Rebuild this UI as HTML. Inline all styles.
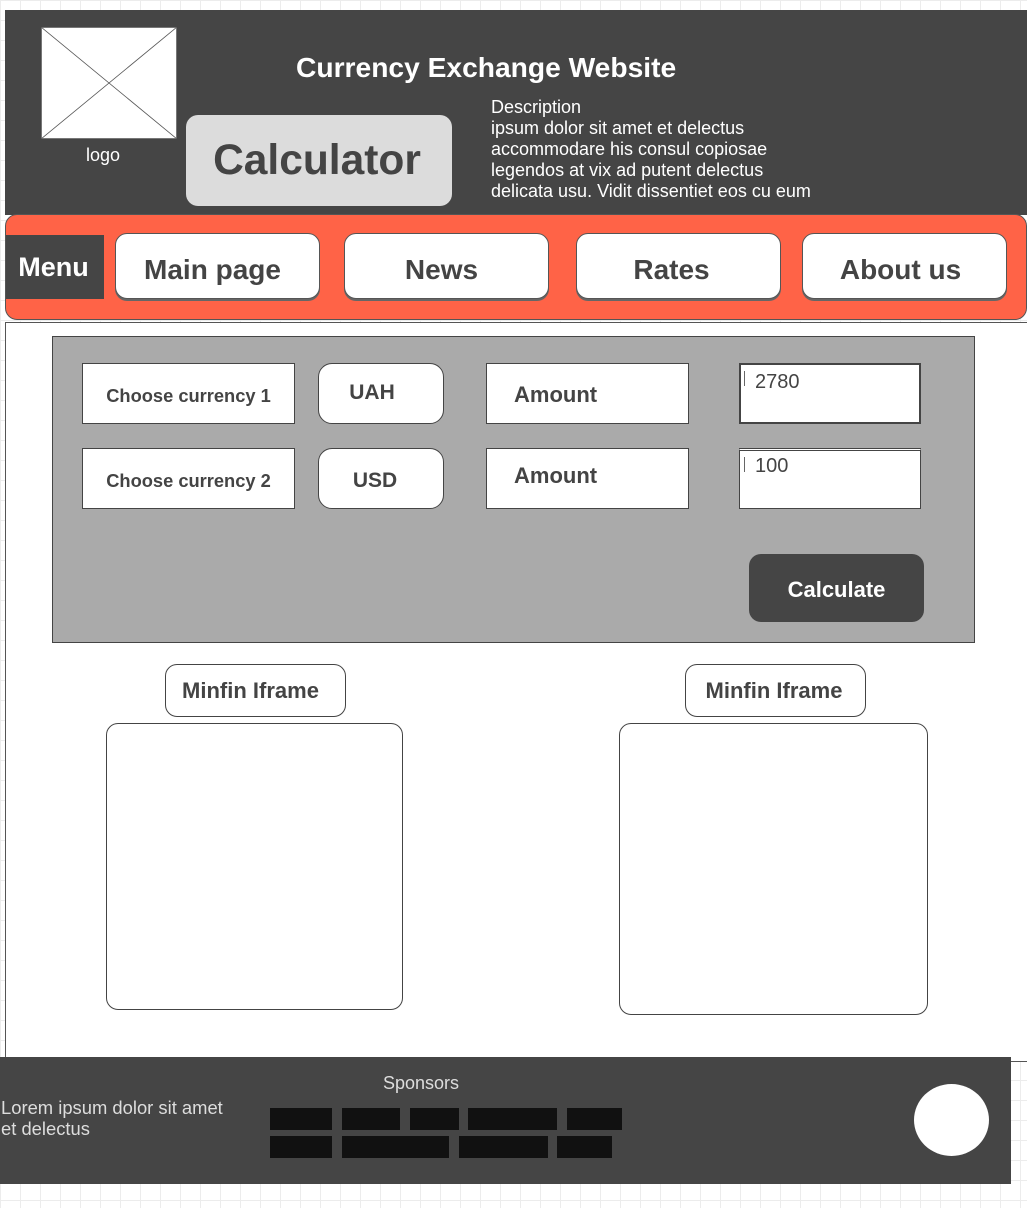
<!DOCTYPE html>
<html><head><meta charset="utf-8"><style>
*{box-sizing:border-box;margin:0;padding:0}
body{width:1027px;height:1208px;position:relative;overflow:hidden;font-family:"Liberation Sans",sans-serif;background-color:#fff;background-image:linear-gradient(#ececec 1px,transparent 1px),linear-gradient(90deg,#ececec 1px,transparent 1px);background-size:20px 20px}
.a{position:absolute}
.c{display:flex;align-items:center;justify-content:center}
.nav{background:#fff;border:1px solid #555;border-radius:12px;color:#444;font-weight:bold;font-size:28px;box-shadow:0 2px 0 #666;padding-top:8px}
.box{background:#fff;border:1px solid #444;color:#444;font-weight:bold}
</style></head><body>
<div class="a" style="left:5px;top:10px;width:1022px;height:205px;background:#454545"></div>
<div class="a" style="left:41px;top:27px;width:136px;height:112px;background:#fff;border:1px solid #777">
<svg width="136" height="112" style="position:absolute;left:-1px;top:-1px"><line x1="0" y1="0" x2="136" y2="112" stroke="#555" stroke-width="0.8"/><line x1="136" y1="0" x2="0" y2="112" stroke="#555" stroke-width="0.8"/></svg></div>
<div class="a" style="left:86px;top:145px;color:#fff;font-size:18px">logo</div>
<div class="a c" style="left:186px;top:115px;width:266px;height:91px;background:#dcdcdc;border-radius:12px;color:#444;font-weight:bold;font-size:42.5px;padding-right:4px">Calculator</div>
<div class="a" style="left:296px;top:51px;color:#fff;font-weight:bold;font-size:28.2px">Currency Exchange Website</div>
<div class="a" style="left:491px;top:97px;color:#fff;font-size:18px;line-height:21px">Description<br>ipsum dolor sit amet et delectus<br>accommodare his consul copiosae<br>legendos at vix ad putent delectus<br>delicata usu. Vidit dissentiet eos cu eum</div>
<div class="a" style="left:5px;top:214px;width:1022px;height:106px;background:#ff6347;border-radius:12px;border:1px solid #555"></div>
<div class="a c" style="left:6px;top:235px;width:98px;height:64px;background:#454545;color:#fff;font-weight:bold;font-size:27px;padding-right:3px">Menu</div>
<div class="a c nav" style="left:115px;top:233px;width:205px;height:66px;padding-right:10px">Main page</div>
<div class="a c nav" style="left:344px;top:233px;width:205px;height:66px;padding-right:10px">News</div>
<div class="a c nav" style="left:576px;top:233px;width:205px;height:66px;padding-right:14px">Rates</div>
<div class="a c nav" style="left:802px;top:233px;width:205px;height:66px;padding-right:8px">About us</div>
<div class="a" style="left:5px;top:322px;width:1024px;height:740px;background:#fff;border:1px solid #555;border-right:none"></div>
<div class="a" style="left:52px;top:336px;width:923px;height:307px;background:#aaa;border:1px solid #444"></div>
<div class="a c box" style="left:82px;top:363px;width:213px;height:61px;font-size:18.3px;padding-top:5px">Choose currency 1</div>
<div class="a c box" style="left:82px;top:448px;width:213px;height:61px;font-size:18.3px;padding-top:5px">Choose currency 2</div>
<div class="a c box" style="left:318px;top:363px;width:126px;height:61px;border-radius:14px;font-size:21px;padding:0 18px 2px 0">UAH</div>
<div class="a c box" style="left:318px;top:448px;width:126px;height:61px;border-radius:14px;font-size:21px;padding:4px 12px 0 0">USD</div>
<div class="a box" style="left:486px;top:363px;width:203px;height:61px;font-size:22px;padding:18px 0 0 27px">Amount</div>
<div class="a box" style="left:486px;top:448px;width:203px;height:61px;font-size:22px;padding:14px 0 0 27px">Amount</div>
<div class="a box" style="left:739px;top:363px;width:182px;height:61px;border-width:2px;font-weight:normal;font-size:20px;padding:6px 0 0 14px">2780</div>
<div class="a box" style="left:739px;top:448px;width:182px;height:61px;border-top:3px double #444;font-weight:normal;font-size:20px;padding:4px 0 0 15px">100</div>
<div class="a" style="left:744px;top:371px;width:1px;height:15px;background:#666"></div>
<div class="a" style="left:744px;top:457px;width:1px;height:15px;background:#666"></div>
<div class="a c" style="left:749px;top:554px;width:175px;height:68px;background:#454545;border-radius:12px;color:#fff;font-weight:bold;font-size:22px;padding-top:4px">Calculate</div>
<div class="a c box" style="left:165px;top:664px;width:181px;height:53px;border-radius:12px;font-size:22px;padding-right:10px">Minfin Iframe</div>
<div class="a c box" style="left:685px;top:664px;width:181px;height:53px;border-radius:12px;font-size:22px;padding-right:3px">Minfin Iframe</div>
<div class="a box" style="left:106px;top:723px;width:297px;height:287px;border-radius:12px"></div>
<div class="a box" style="left:619px;top:723px;width:309px;height:292px;border-radius:12px"></div>
<div class="a" style="left:0;top:1057px;width:1011px;height:127px;background:#454545"></div>
<div class="a" style="left:383px;top:1073px;color:#ddd;font-size:18px">Sponsors</div>
<div class="a" style="left:1px;top:1097px;color:#ddd;font-size:18.4px;line-height:21px">Lorem ipsum dolor sit amet<br>et delectus</div>
<div class="a" style="left:270px;top:1108px;width:62px;height:22px;background:#111"></div>
<div class="a" style="left:342px;top:1108px;width:58px;height:22px;background:#111"></div>
<div class="a" style="left:410px;top:1108px;width:49px;height:22px;background:#111"></div>
<div class="a" style="left:468px;top:1108px;width:89px;height:22px;background:#111"></div>
<div class="a" style="left:567px;top:1108px;width:55px;height:22px;background:#111"></div>
<div class="a" style="left:270px;top:1136px;width:62px;height:22px;background:#111"></div>
<div class="a" style="left:342px;top:1136px;width:107px;height:22px;background:#111"></div>
<div class="a" style="left:459px;top:1136px;width:89px;height:22px;background:#111"></div>
<div class="a" style="left:557px;top:1136px;width:55px;height:22px;background:#111"></div>
<div class="a" style="left:914px;top:1084px;width:75px;height:72px;background:#fff;border-radius:50%"></div>
</body></html>
